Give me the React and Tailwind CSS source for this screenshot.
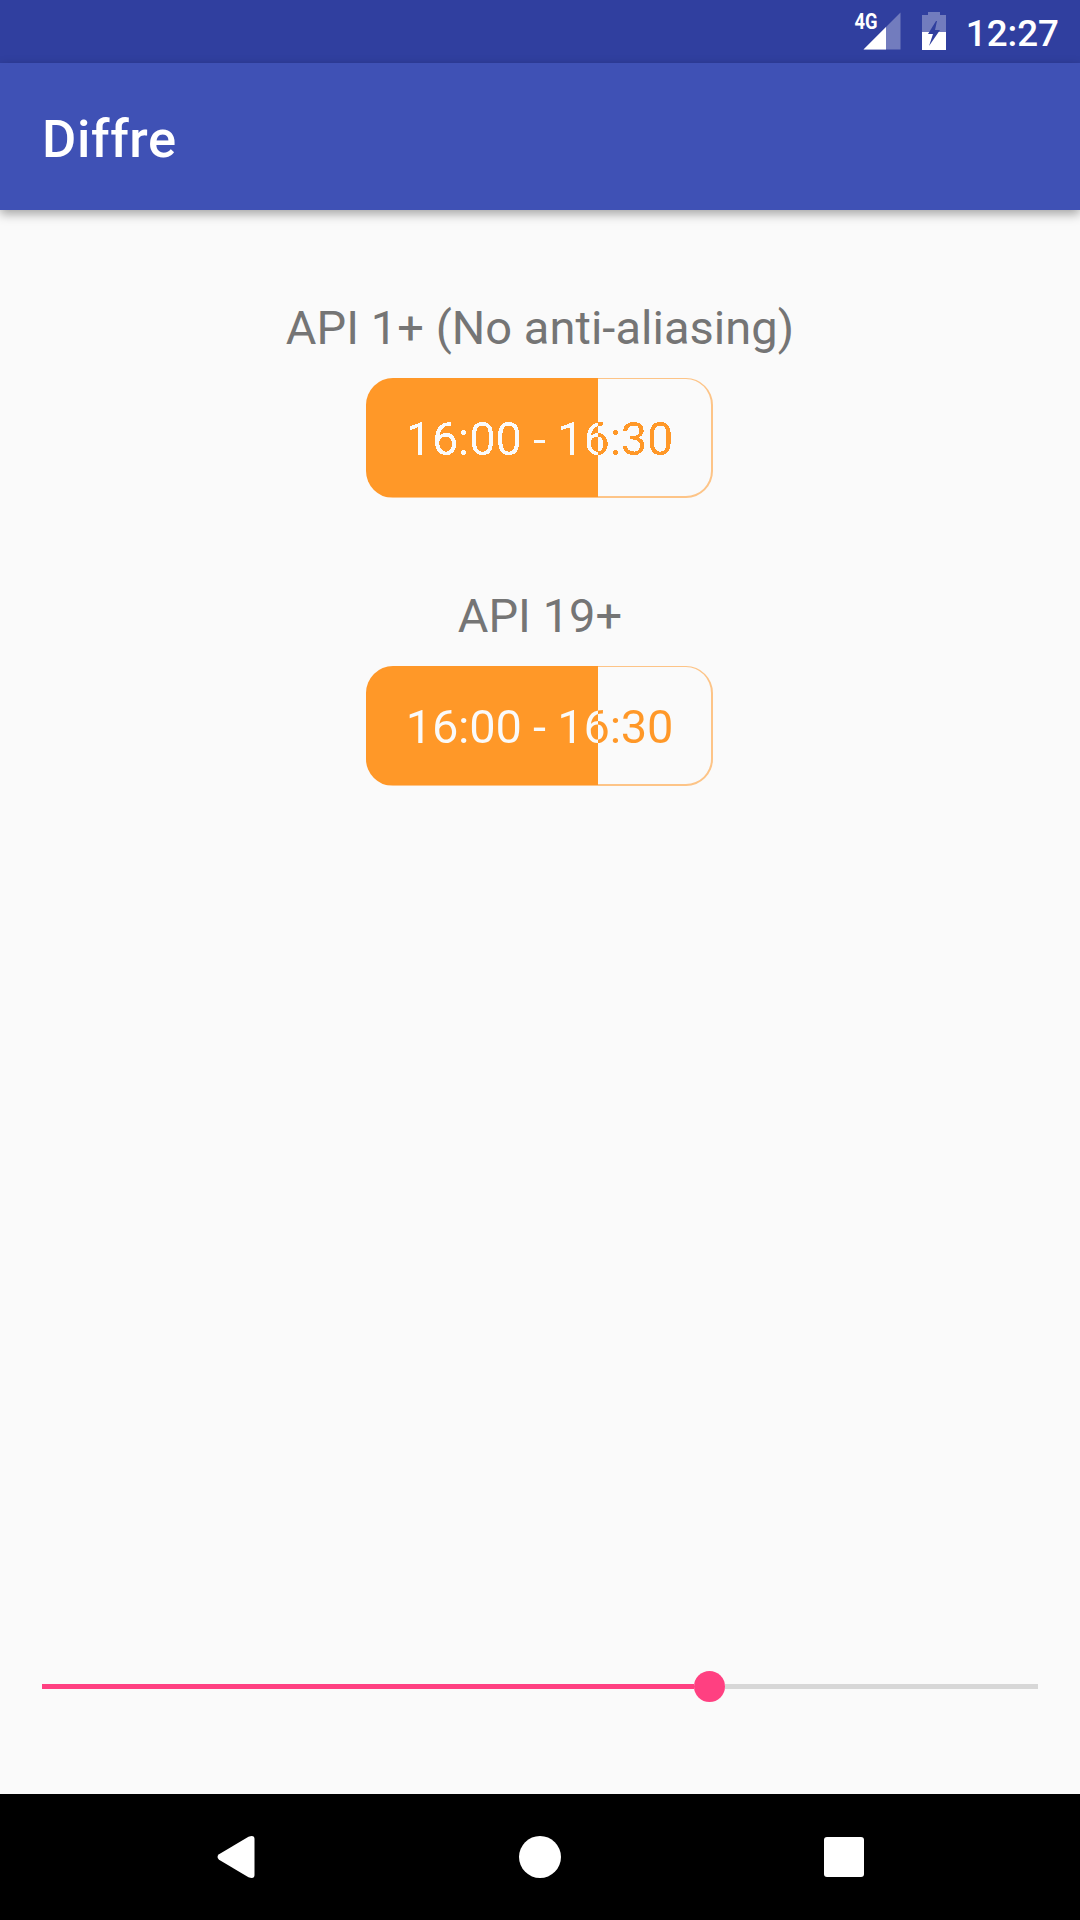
import React from "react";

function StatusBar() {
  return (
    <div className="flex h-[63px] items-start justify-end bg-[#303f9f] text-white">
      <svg className="mt-[10px] h-[42px] w-[50px]" viewBox="0 0 50 42">
        <path d="M46.5 2.5V39.5H9.5Z" fill="#fff" fillOpacity=".32" />
        <path d="M32 17V39.5H9.5Z" fill="#fff" />
        <text x="0.5" y="19" fontSize="22" fontWeight="700" textLength="23" lengthAdjust="spacingAndGlyphs" fill="#fff" fontFamily="Roboto, sans-serif">4G</text>
      </svg>
      <svg className="ml-[18px] mt-[12px] h-[38px] w-[24px]" viewBox="0 0 24 38">
        <defs>
          <mask id="bolt">
            <rect width="24" height="38" fill="#fff" />
            <path d="M14 9L6 22h5l-4 12L18 18h-5L15 9Z" fill="#000" />
          </mask>
        </defs>
        <g mask="url(#bolt)">
          <path d="M0 3h6V0h12v3h6v17H0Z" fill="#fff" fillOpacity=".32" />
          <path d="M0 20h24v18H0Z" fill="#fff" />
        </g>
      </svg>
      <span className="ml-[20px] mr-[21px] mt-[12px] text-[36.75px] font-medium leading-[44px]">12:27</span>
    </div>
  );
}

function Chip({ crisp }) {
  return (
    <div className="flex h-[120px] w-[347px] items-center overflow-hidden rounded-[27px] border border-b-2 border-r-2 border-[#ff9828]/55 bg-[#fafafa] bg-[linear-gradient(to_right,#ff9828_232px,#fafafa_232px)] bg-[length:100%_119px] bg-no-repeat bg-origin-border">
      <span
        className={
          "mt-[3px] w-[345px] shrink-0 bg-[linear-gradient(to_right,#fafafa_231px,#ff9828_231px)] bg-clip-text text-center text-[47px] leading-[56px] tracking-[-0.22px] text-transparent " +
          (crisp ? "[filter:url(#hard-edges)]" : "")
        }
      >
        16:00 - 16:30
      </span>
    </div>
  );
}

function Section({ label, crisp }) {
  return (
    <section className="flex flex-col items-center">
      <h2 className="text-[47px] leading-[56px] tracking-[0.04px] text-[#757575]">{label}</h2>
      <div className="mr-px mt-[22px]">
        <Chip crisp={crisp} />
      </div>
    </section>
  );
}

function Slider() {
  return (
    <div className="mx-[42px] flex h-[32px] items-center">
      <div className="h-[5px] w-[652px] bg-[#ff4081]" />
      <div className="h-[31px] w-[31px] rounded-full bg-[#ff4081]" />
      <div className="h-[5px] flex-1 bg-[#d7d7d7]" />
    </div>
  );
}

function NavBar() {
  return (
    <nav className="flex h-[126px] items-center bg-black pl-[217px]">
      <svg className="h-[44px] w-[39px]" viewBox="0 0 39 44">
        <path d="M2 19.3L31.5 1.7Q37.5-.5 37.5 4V40Q37.5 44.5 31.5 42.3L2 24.7Q-1 22 2 19.3Z" fill="#fff" />
      </svg>
      <div className="ml-[263px] h-[42px] w-[42px] rounded-full bg-white" />
      <div className="ml-[263px] h-[40px] w-[40px] rounded-[3px] bg-white" />
    </nav>
  );
}

export default function App() {
  return (
    <div className="flex h-[1920px] w-[1080px] flex-col overflow-hidden bg-[#fafafa] font-[Roboto,sans-serif]">
      <svg className="hidden">
        <filter id="hard-edges" colorInterpolationFilters="sRGB">
          <feComponentTransfer>
            <feFuncA type="discrete" tableValues="0 1" />
          </feComponentTransfer>
        </filter>
      </svg>
      <StatusBar />
      <header className="flex h-[147px] items-center bg-[#3f51b5] pl-[42px] pt-[4px] shadow-[0_4px_10px_rgba(0,0,0,0.35)]">
        <h1 className="text-[52.5px] font-medium leading-[62px] tracking-[0.65px] text-white [font-variant-ligatures:none]">Diffre</h1>
      </header>
      <main className="flex flex-1 flex-col pt-[90px]">
        <div className="flex flex-col gap-[90px]">
          <Section label="API 1+ (No anti-aliasing)" crisp />
          <Section label="API 19+" />
        </div>
        <div className="mb-[92px] mt-auto">
          <Slider />
        </div>
      </main>
      <NavBar />
    </div>
  );
}
